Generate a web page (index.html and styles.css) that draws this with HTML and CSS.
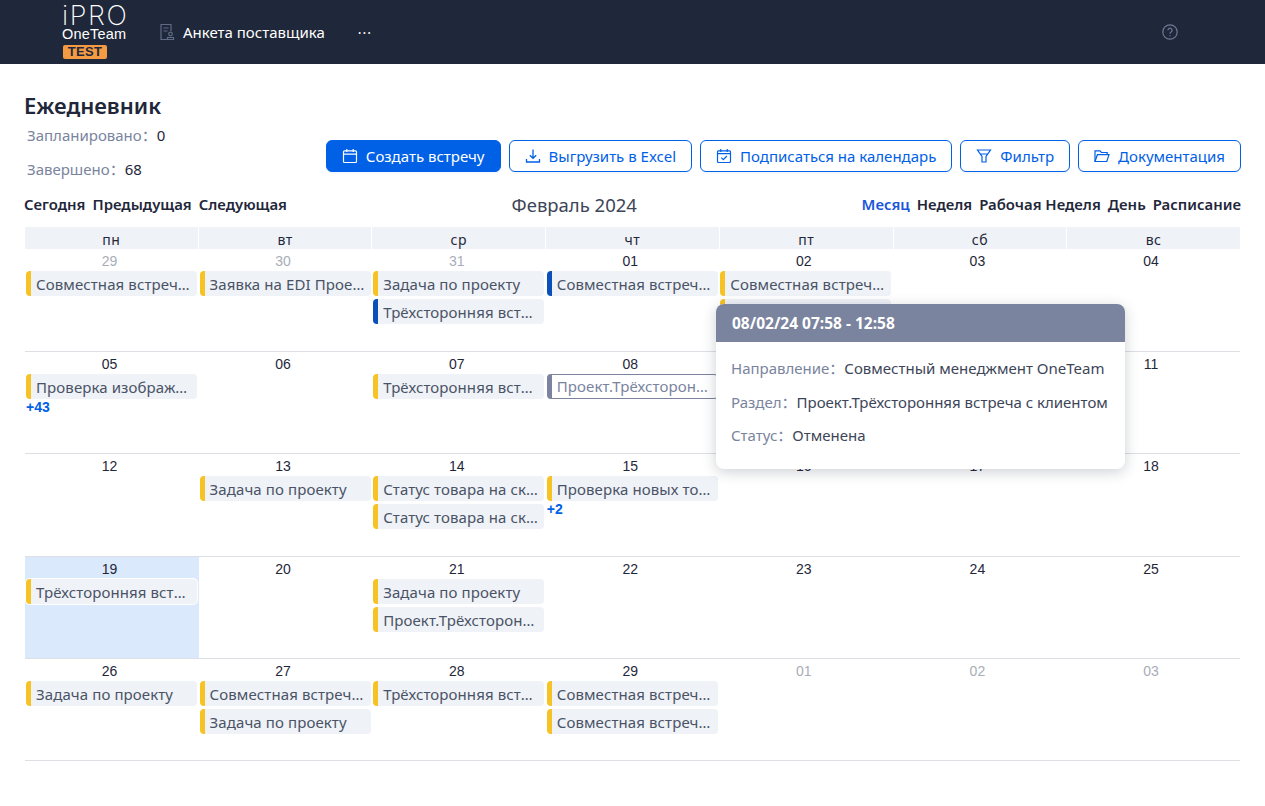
FILE: index.html
```html
<!DOCTYPE html>
<html lang="ru">
<head>
  <meta charset="UTF-8">
  <title>Ежедневник</title>
  <link rel="stylesheet" href="styles.css">
</head>
<body>

  <header class="topbar">
    <div class="logo">
      <div class="logo-main">iPRO</div>
      <div class="logo-sub">OneTeam</div>
      <div class="logo-badge">TEST</div>
    </div>
    <a class="nav-item">
      <svg class="nav-icon" width="16" height="18" viewBox="0 0 16 18" fill="none" stroke="#5f6b85" stroke-width="1.2"><path d="M12 8V1.5H2v15h6"/><path d="M4.5 5h5M4.5 8h4"/><circle cx="11.5" cy="11" r="1.8"/><path d="M8.5 16.5v-2h6v2z"/></svg>
      <span>Анкета поставщика</span>
    </a>
    <span class="nav-more">···</span>
    <svg class="help-icon" width="16" height="16" viewBox="0 0 16 16" fill="none" stroke="#6f7a94" stroke-width="1.2"><circle cx="8" cy="8" r="7.2"/><path d="M5.9 6.3a2.1 2.1 0 1 1 3.2 1.8c-.7.4-1.1.8-1.1 1.6"/><path d="M8 11.2v1.1"/></svg>
  </header>

  <main class="page">
    <h1 class="title">Ежедневник</h1>

    <div class="summary-row">
      <div class="summary">
        <p><span class="label">Запланировано：</span>0</p>
        <p><span class="label">Завершено：</span>68</p>
      </div>
      <div class="actions">
        <button class="btn btn-primary">
          <svg width="16" height="16" viewBox="0 0 16 16" fill="none" stroke="currentColor" stroke-width="1.2"><rect x="1.5" y="2.8" width="13" height="11.7" rx="1"/><path d="M1.5 6.2h13M4.8 1v3M11.2 1v3"/></svg>
          Создать встречу
        </button>
        <button class="btn">
          <svg width="16" height="16" viewBox="0 0 16 16" fill="none" stroke="currentColor" stroke-width="1.3"><path d="M8 1.5v8.5M4.8 7.2 8 10.3l3.2-3.1M1.5 11v3h13v-3"/></svg>
          Выгрузить в Excel
        </button>
        <button class="btn">
          <svg width="16" height="16" viewBox="0 0 16 16" fill="none" stroke="currentColor" stroke-width="1.2"><rect x="1.5" y="2.8" width="13" height="11.7" rx="1"/><path d="M1.5 5.6h13M4.8 1v3M11.2 1v3M5.3 9.6l2 2 3.6-3.6"/></svg>
          Подписаться на календарь
        </button>
        <button class="btn">
          <svg width="16" height="16" viewBox="0 0 16 16" fill="none" stroke="currentColor" stroke-width="1.2"><path d="M1.5 2h13L10 8.5v5.5H6V8.5zM4 6h8"/></svg>
          Фильтр
        </button>
        <button class="btn">
          <svg width="16" height="16" viewBox="0 0 16 16" fill="none" stroke="currentColor" stroke-width="1.2"><path d="M1 13.5V2.8h5l1.4 1.7h5.8v2.2"/><path d="M1 13.5l2.4-6.8H15l-2.2 6.8z"/></svg>
          Документация
        </button>
      </div>
    </div>

    <div class="toolbar">
      <div class="tool-group">
        <span>Сегодня</span><span>Предыдущая</span><span>Следующая</span>
      </div>
      <div class="month-label">Февраль 2024</div>
      <div class="tool-group">
        <span class="active">Месяц</span><span>Неделя</span><span>Рабочая Неделя</span><span>День</span><span>Расписание</span>
      </div>
    </div>

    <section class="calendar">
      <div class="weekdays">
        <div>пн</div><div>вт</div><div>ср</div><div>чт</div><div>пт</div><div>сб</div><div>вс</div>
      </div>

      <div class="week">
        <div class="day"><div class="date muted">29</div><div class="event">Совместная встреча OneTeam</div></div>
        <div class="day"><div class="date muted">30</div><div class="event">Заявка на EDI Проект OneTeam</div></div>
        <div class="day"><div class="date muted">31</div><div class="event">Задача по проекту</div><div class="event blue">Трёхсторонняя встреча с клиентом</div></div>
        <div class="day"><div class="date">01</div><div class="event blue">Совместная встреча OneTeam</div></div>
        <div class="day"><div class="date">02</div><div class="event">Совместная встреча OneTeam</div><div class="event">Совместная встреча OneTeam</div></div>
        <div class="day"><div class="date">03</div></div>
        <div class="day"><div class="date">04</div></div>
      </div>

      <div class="week">
        <div class="day"><div class="date">05</div><div class="event">Проверка изображений товара</div><a class="more">+43</a></div>
        <div class="day"><div class="date">06</div></div>
        <div class="day"><div class="date">07</div><div class="event">Трёхсторонняя встреча с клиентом</div></div>
        <div class="day"><div class="date">08</div><div class="event cancelled">Проект.Трёхсторонняя встреча с клиентом</div></div>
        <div class="day"><div class="date">09</div></div>
        <div class="day"><div class="date">10</div></div>
        <div class="day"><div class="date">11</div></div>
      </div>

      <div class="week">
        <div class="day"><div class="date">12</div></div>
        <div class="day"><div class="date">13</div><div class="event">Задача по проекту</div></div>
        <div class="day"><div class="date">14</div><div class="event">Статус товара на складе</div><div class="event">Статус товара на складе</div></div>
        <div class="day"><div class="date">15</div><div class="event">Проверка новых товаров</div><a class="more">+2</a></div>
        <div class="day"><div class="date">16</div></div>
        <div class="day"><div class="date">17</div></div>
        <div class="day"><div class="date">18</div></div>
      </div>

      <div class="week">
        <div class="day today"><div class="date">19</div><div class="event">Трёхсторонняя встреча с клиентом</div></div>
        <div class="day"><div class="date">20</div></div>
        <div class="day"><div class="date">21</div><div class="event">Задача по проекту</div><div class="event">Проект.Трёхсторонняя встреча с клиентом</div></div>
        <div class="day"><div class="date">22</div></div>
        <div class="day"><div class="date">23</div></div>
        <div class="day"><div class="date">24</div></div>
        <div class="day"><div class="date">25</div></div>
      </div>

      <div class="week">
        <div class="day"><div class="date">26</div><div class="event">Задача по проекту</div></div>
        <div class="day"><div class="date">27</div><div class="event">Совместная встреча OneTeam</div><div class="event">Задача по проекту</div></div>
        <div class="day"><div class="date">28</div><div class="event">Трёхсторонняя встреча с клиентом</div></div>
        <div class="day"><div class="date">29</div><div class="event">Совместная встреча OneTeam</div><div class="event">Совместная встреча OneTeam</div></div>
        <div class="day"><div class="date muted">01</div></div>
        <div class="day"><div class="date muted">02</div></div>
        <div class="day"><div class="date muted">03</div></div>
      </div>
    </section>
  </main>

  <div class="popup">
    <div class="popup-head">08/02/24 07:58 - 12:58</div>
    <div class="popup-body">
      <p><span class="popup-label">Направление：</span>Совместный менеджмент OneTeam</p>
      <p><span class="popup-label">Раздел：</span>Проект.Трёхсторонняя встреча с клиентом</p>
      <p><span class="popup-label">Статус：</span>Отменена</p>
    </div>
  </div>

</body>
</html>
```

FILE: styles.css
```css
* {
  box-sizing: border-box;
}
body {
  margin: 0;
  font-family: "Noto Sans", "Noto Sans CJK SC", sans-serif;
  font-size: 15px;
  color: #1f273a;
  background-color: #fff;
  overflow: hidden;
}
p {
  margin: 0;
}

/* top bar */
.topbar {
  display: flex;
  align-items: center;
  height: 64px;
  padding-left: 62px;
  background-color: #1f273a;
  color: #fff;
}
.logo {
  display: flex;
  flex-direction: column;
  width: 66px;
  height: 64px;
  padding-top: 5px;
  font-family: "Liberation Sans", sans-serif;
}
.logo-main {
  font-family: Inter, sans-serif;
  font-weight: 200;
  font-size: 27px;
  line-height: 22px;
  letter-spacing: 1.6px;
}
.logo-sub {
  margin-top: -1px;
  font-size: 14.5px;
  line-height: 16px;
  letter-spacing: 0.2px;
}
.logo-badge {
  width: 44px;
  height: 14px;
  margin-top: 3px;
  margin-left: 1px;
  background-color: #f39a43;
  border-radius: 2px;
  color: #1f273a;
  font-size: 13px;
  font-weight: 700;
  line-height: 14px;
  text-align: center;
  letter-spacing: 0.3px;
}
.nav-item {
  display: flex;
  align-items: center;
  gap: 8px;
  margin-left: 31px;
  font-size: 15px;
}
.nav-more {
  margin-left: 33px;
  font-size: 14px;
  letter-spacing: 1px;
}
.help-icon {
  margin-left: auto;
  margin-right: 87px;
}

/* page */
.page {
  padding: 27px 24px 0 25px;
}
.title {
  margin: 0 0 0 -1px;
  font-size: 22px;
  font-weight: 600;
  line-height: 28px;
}
.summary-row {
  display: flex;
  justify-content: space-between;
  align-items: flex-start;
}
.summary {
  padding: 6px 0 0 2px;
}
.summary p {
  line-height: 20px;
  margin-bottom: 14px;
}
.label {
  color: #7a849e;
}
.actions {
  display: flex;
  gap: 8px;
  padding-top: 21px;
}
.btn {
  display: flex;
  align-items: center;
  justify-content: center;
  gap: 8px;
  height: 32px;
  padding: 0 15px;
  border: 1px solid #0060e6;
  border-radius: 6px;
  background-color: #fff;
  color: #0060e6;
  font-family: inherit;
  font-size: 15px;
  box-shadow: 0 2px 0 rgba(0, 96, 230, 0.04);
}
.btn-primary {
  background-color: #0060e6;
  color: #fff;
}

/* calendar toolbar */
.toolbar {
  display: flex;
  justify-content: space-between;
  align-items: center;
  height: 26px;
  margin: -2px 0 0 -1px;
}
.tool-group {
  display: flex;
  gap: 7px;
  font-size: 14.9px;
  font-weight: 600;
}
.tool-group .active {
  color: #1a56db;
}
.month-label {
  font-size: 18.5px;
  color: #3d4558;
}

/* calendar grid */
.calendar {
  margin: 10px 1px 0 0;
}
.weekdays {
  display: grid;
  grid-template-columns: repeat(7, 1fr);
  grid-auto-rows: 22.4px;
  column-gap: 1px;
}
.weekdays div {
  background-color: #eff2f7;
  font-size: 14px;
  line-height: 26px;
  letter-spacing: 0.5px;
  text-align: center;
  overflow: hidden;
}
.week {
  display: grid;
  grid-template-columns: repeat(7, 1fr);
  height: 102.4px;
  border-bottom: 1px solid #dcdfe4;
}
.day {
  min-width: 0;
  padding: 0 1.5px 0 1px;
}
.today {
  background-color: #dbe9fc;
}
.date {
  height: 22px;
  padding-right: 4px;
  font-family: "Liberation Sans", sans-serif;
  font-size: 14px;
  line-height: 24px;
  text-align: center;
}
.muted {
  color: #a8adb8;
}
.event {
  height: 25px;
  margin-bottom: 3px;
  padding-left: 5px;
  padding-right: 3px;
  border-left: 5px solid #f7c223;
  border-radius: 4px;
  background-color: #eff2f7;
  color: #4a5266;
  font-size: 15px;
  line-height: 26px;
  letter-spacing: 0.1px;
  white-space: nowrap;
  overflow: hidden;
  text-overflow: ellipsis;
}
.event.blue {
  border-left-color: #0b50b8;
}
.event.cancelled {
  border: 1px solid #7a849e;
  border-left: 5px solid #7a849e;
  background-color: #fff;
  color: #7a849e;
  line-height: 23px;
}
.today .event {
  box-shadow: 0 0 0 1px #fff;
}
.more {
  display: block;
  margin-top: -3px;
  color: #0060e6;
  font-family: "Liberation Sans", sans-serif;
  font-size: 14px;
  font-weight: 700;
  line-height: 16px;
}

/* hover card over the calendar */
.popup {
  position: absolute;
  left: 716px;
  top: 304px;
  width: 409px;
  height: 165px;
  border-radius: 8px;
  background-color: #fff;
  box-shadow: 0 3px 14px rgba(31, 39, 58, 0.22);
  overflow: hidden;
}
.popup-head {
  height: 38px;
  padding-left: 16px;
  background-color: #7a849e;
  color: #fff;
  font-size: 15.5px;
  font-weight: 700;
  line-height: 38px;
}
.popup-body {
  padding: 16px 15px 0;
  color: #3d4558;
}
.popup-body p {
  line-height: 20px;
  margin-bottom: 13.7px;
  white-space: nowrap;
}
.popup-label {
  color: #7a849e;
}
```
